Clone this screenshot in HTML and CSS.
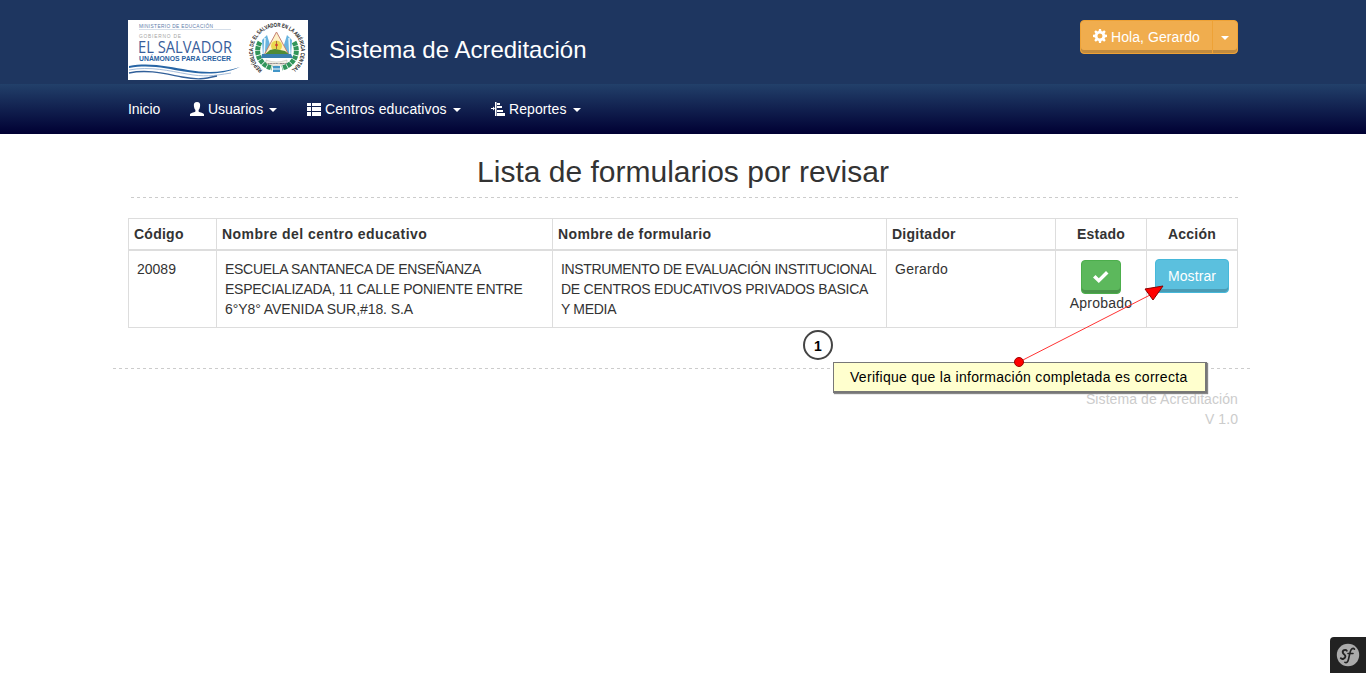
FILE: index.html
```html
<!DOCTYPE html>
<html lang="es">
<head>
<meta charset="utf-8">
<title>Sistema de Acreditación</title>
<link rel="stylesheet" href="styles.css">
</head>
<body>
<header class="header">
  <div class="container header-row">
    <svg class="logo" viewBox="0 0 180 60">
      <defs>
        <path id="seal-ring" d="M134.500 50 A24 24 0 1 1 163.500 50"/>
      </defs>
      <rect width="180" height="60" fill="#fff"/>
      <text class="logo-small" x="11" y="8" textLength="74" fill="#607ca9">MINISTERIO DE EDUCACIÓN</text>
      <path d="M11 9.500H103" stroke="#b9c8da" stroke-width=".6"/>
      <text class="logo-small" x="11" y="18" textLength="42" fill="#a5a5a5">GOBIERNO DE</text>
      <text class="logo-name" x="10" y="33" textLength="94" lengthAdjust="spacingAndGlyphs" fill="#395e9b">EL SALVADOR</text>
      <text class="logo-motto" x="11" y="41" textLength="92" lengthAdjust="spacingAndGlyphs" fill="#2861a1">UNÁMONOS PARA CRECER</text>
      <path d="M1 46C22 42 42 47 60 50S94 53 112 47C92 56 73 54 56 51.500S23 44 1 48Z" fill="#2765a5"/>
      <path d="M1 50C22 46 42 51 59 54S85 56 103 53" fill="none" stroke="#8facd0" stroke-width=".8"/>
      <path d="M1 53C20 49 38 54 54 57S76 59 89 56" fill="none" stroke="#315f99" stroke-width="1.300"/>
      <g fill="none" stroke="#31955a" stroke-width="5" stroke-dasharray="4 .7">
        <path d="M132 22C126 33 132 45 144 48"/>
        <path d="M166 22C172 33 166 45 154 48"/>
      </g>
      <path d="M134 20l5-5 4 13-8 9zM164 20l-5-5-4 13 8 9z" fill="#69b4df"/>
      <path d="M137 18l-1 18M161 18l1 18" stroke="#eef8fc" stroke-width="1.500"/>
      <path d="M148.500 12L135 37H162Z" fill="#fff1c7" stroke="#c58172" stroke-width="1"/>
      <circle cx="148.500" cy="26" r="5.500" fill="#ead84f"/>
      <path d="M136 35l6-5 5-1 5 1 5 1 5 4z" fill="#508b35"/>
      <path d="M134 34h29l2 4h-32z" fill="#397fad"/>
      <path d="M148.500 21v8" stroke="#a66c3c" stroke-width="1"/>
      <circle cx="148.500" cy="25" r="1.300" fill="#d23b30"/>
      <path d="M138 40q10 4 21 0v3q-11 5-21 0z" fill="#f5f1e8" stroke="#aaa69a" stroke-width=".4"/>
      <text class="ribbon" x="140" y="43.800">DIOS UNIÓN LIBERTAD</text>
      <path d="M145 46h7v6h-7z" fill="#4295c7"/><path d="M145 49h7" stroke="#fff"/>
      <text class="seal" fill="#222"><textPath href="#seal-ring" textLength="119" lengthAdjust="spacingAndGlyphs">REPÚBLICA DE EL SALVADOR EN LA AMÉRICA CENTRAL</textPath></text>
    </svg>
    <div class="brand">Sistema de Acreditación</div>
    <div class="user-button">
      <span class="user-name"><svg class="icon gear" viewBox="0 0 14 14"><path fill-rule="evenodd" d="M6 0h2l.4 2 1 .4L11.200 1.200l1.500 1.500-1.100 1.700.4 1 2 .4v2.300l-2 .4-.4 1 1.100 1.700-1.500 1.500-1.800-1.100-1 .4L8 14H6l-.4-2-1-.4-1.800 1.100-1.500-1.500 1.100-1.700-.4-1-2-.4V5.800l2-.4.4-1-1.100-1.700 1.500-1.500 1.800 1.200 1-.4zM7 4.500a2.500 2.500 0 1 0 0 5 2.500 2.500 0 0 0 0-5z"/></svg> Hola, Gerardo</span>
      <span class="user-toggle"><span class="caret"></span></span>
    </div>
  </div>
</header>
<nav class="nav">
  <div class="container nav-row">
    <a class="home">Inicio</a>
    <a class="users"><svg class="icon" viewBox="0 0 14 14"><path d="M7 0C4.600 0 3.600 1.600 3.900 4c.2 2 .8 3 1.500 4v1.500C4 10.600 0 11 0 12.600V14h14v-1.400C14 11 10 10.600 8.600 9.500V8c.8-1 1.300-2 1.500-4C10.400 1.600 9.400 0 7 0z"/></svg> Usuarios <span class="caret"></span></a>
    <a class="schools"><svg class="icon" viewBox="0 0 14 14"><path d="M0 1h4v3H0zm5 0h9v3H5zM0 5h4v4H0zm5 0h9v4H5zM0 10h4v4H0zm5 0h9v4H5z"/></svg> Centros educativos <span class="caret"></span></a>
    <a class="reports"><svg class="icon" viewBox="0 0 14 14"><path d="M4 0h1.500v14H4zM0 6h2V4.500L4 6.500l-2 2V7H0zM6 1h3v2H6zm0 3h5v2H6zm0 4h6v2H6zm0 3h9v3H6z"/></svg> Reportes <span class="caret"></span></a>
  </div>
</nav>
<main class="container main">
  <h1 class="title">Lista de formularios por revisar</h1>
  <svg class="rule" viewBox="0 0 1110 1"><path d="M3 .5H1110"/></svg>
  <table class="forms">
    <colgroup><col class="c-code"><col class="c-school"><col class="c-form"><col class="c-typist"><col class="c-action"><col class="c-action"></colgroup>
    <thead><tr><th>Código</th><th class="wide">Nombre del centro educativo</th><th class="semiwide">Nombre de formulario</th><th>Digitador</th><th class="center">Estado</th><th class="center">Acción</th></tr></thead>
    <tbody><tr>
      <td>20089</td>
      <td><span class="line school-a">ESCUELA SANTANECA DE ENSEÑANZA</span><span class="line school-b">ESPECIALIZADA, 11 CALLE PONIENTE ENTRE</span><span class="line school-c">6°Y8° AVENIDA SUR,#18. S.A</span></td>
      <td><span class="line form-a">INSTRUMENTO DE EVALUACIÓN INSTITUCIONAL</span><span class="line form-b">DE CENTROS EDUCATIVOS PRIVADOS BASICA</span><span class="line form-c">Y MEDIA</span></td>
      <td class="typist">Gerardo</td>
      <td class="center"><span class="button approved"><svg class="icon check" viewBox="0 0 16 14"><path d="M0 7.500L2.500 5l3.300 3.300L13 1l2.500 2.500L5.800 13z"/></svg></span><span class="state">Aprobado</span></td>
      <td class="center"><span class="button show">Mostrar</span></td>
    </tr></tbody>
  </table>
</main>
<footer class="footer">
  <svg class="footer-rule" viewBox="0 0 1140 1"><path d="M0 .5H1140"/></svg>
  <div class="container footer-text">Sistema de Acreditación<br>V 1.0</div>
</footer>
<div class="step">1</div>
<div class="callout">Verifique que la información completada es correcta</div>
<svg class="arrow" viewBox="0 0 160 90">
  <path d="M9 77L142 9" stroke="#f33" stroke-width="1"/>
  <path d="M153 1L135 4L143 15Z" fill="#f00" stroke="#8b0000" stroke-width="1"/>
  <circle cx="9" cy="77" r="4.500" fill="#f00" stroke="#a00000"/>
</svg>
<div class="debug"><svg viewBox="0 0 24 24"><circle cx="12" cy="12" r="11.200" fill="#aaa"/><path d="M10.800 7.800C9.600 6 6.200 7.300 6.800 9.500c.5 1.900 2.900 2.200 2.600 4.200-.3 2-3.300 3-4.600 1.500" fill="none" stroke="#222" stroke-width="1.900" stroke-linecap="round"/><path d="M18.500 6.200c-1.500-1.900-3.600-.3-4.300 2.700l-1.700 7.400c-.6 2.700-1.800 4-3.600 3.100M12 10.500h5" fill="none" stroke="#222" stroke-width="1.600" stroke-linecap="round"/></svg></div>
</body>
</html>
```
FILE: styles.css
```css
* { box-sizing: border-box; }
body { margin: 0; height: 673px; overflow: hidden; position: relative; background: #fff; color: #333; font: 14px/20px "Liberation Sans", Arial, sans-serif; }
.container { width: 1110px; margin: 0 auto; }
.header { height: 84px; background: #1e3660; }
.header-row { display: flex; align-items: flex-start; padding-top: 20px; }
.logo { display: block; width: 180px; height: 60px; }
.logo-small { font-size: 4.8px; }
.logo-name { font: 17px "Open Sans", sans-serif; }
.logo-motto { font-size: 7px; font-weight: bold; }
.seal { font-size: 5.8px; font-weight: bold; }
.ribbon { font-size: 1.7px; }
.brand { margin: 14px 0 0 21px; color: #fff; font-size: 24px; line-height: 32px; }
.user-button { display: flex; width: 158px; height: 34px; margin-left: auto; color: #fff; background: #f0ad4e; border: 1px solid #eea236; border-radius: 4px; box-shadow: inset 0 -3px #c28b3e; }
.user-name { width: 132px; padding: 6px 0 0 12px; border-right: 1px solid #eea236; white-space: nowrap; letter-spacing: .08px; }
.user-toggle { padding: 6px 0 0 8px; }
.icon { display: inline-block; width: 14px; height: 14px; fill: #fff; vertical-align: -1px; }
.nav .icon { vertical-align: -2px; }
.caret { display: inline-block; margin-left: 2px; border-top: 4px solid #fff; border-left: 4px solid transparent; border-right: 4px solid transparent; vertical-align: middle; }
.user-toggle .caret { margin-left: 0; }
.nav { height: 50px; background: linear-gradient(#22406a, #000033); }
.nav-row { display: flex; gap: 30px; padding-top: 15px; color: #fff; }
.nav-row a { white-space: nowrap; }
.home { width: 32px; letter-spacing: -.1px; }
.users { width: 87px; }
.schools { width: 154px; letter-spacing: .1px; }
.reports { letter-spacing: .1px; }
.main { height: 234px; padding-top: 21px; }
.title { margin: 0; font-size: 30px; line-height: 34px; font-weight: normal; text-align: center; }
.rule { display: block; width: 1110px; height: 1px; margin: 8px 0 20px; }
.rule path, .footer-rule path { stroke: #ccc; stroke-dasharray: 3 3; }
.forms { width: 1110px; table-layout: fixed; border-collapse: collapse; }
.c-code { width: 88px; }
.c-school { width: 336px; }
.c-form { width: 334px; }
.c-typist { width: 169px; }
.c-action { width: 91px; }
.forms th { padding: 5px; border: 1px solid #ddd; border-bottom-width: 2px; text-align: left; letter-spacing: .25px; }
.forms .wide { letter-spacing: .46px; }
.forms .semiwide { letter-spacing: .36px; }
.forms td { height: 77px; padding: 8px 0 8px 8px; border: 1px solid #ddd; vertical-align: top; white-space: nowrap; }
.forms .center { padding-left: 0; padding-right: 0; text-align: center; }
.line { display: block; }
.school-a { letter-spacing: -.3px; }
.school-b { letter-spacing: -.25px; }
.school-c { letter-spacing: -.07px; }
.form-a { letter-spacing: -.36px; }
.form-b { letter-spacing: -.24px; }
.form-c { letter-spacing: -.3px; }
.typist { letter-spacing: .25px; }
.button { display: block; height: 34px; margin: 0 auto; padding-top: 6px; border: 1px solid; border-radius: 4px; color: #fff; }
.approved { width: 40px; margin-top: 1px; background: #5cb85c; border-color: #4cae4c; box-shadow: inset 0 -3px #4a954a; }
.check { width: 16px; vertical-align: -2px; }
.show { width: 74px; background: #5bc0de; border-color: #46b8da; box-shadow: inset 0 -3px #4a9bb4; letter-spacing: .1px; }
.state { display: block; margin-top: -1px; letter-spacing: .2px; }
.footer-rule { display: block; width: 1140px; height: 1px; margin: 0 auto 20px; }
.footer-text { text-align: right; color: #ccc; letter-spacing: .08px; }
.step { position: absolute; left: 803px; top: 330px; width: 30px; height: 30px; border: 2px solid #444; border-radius: 50%; background: #fff; color: #000; font-weight: bold; line-height: 28px; text-align: center; }
.callout { position: absolute; left: 833px; top: 362px; width: 374px; height: 31px; padding: 4px 0 0 16px; background: #ffffce; border: 1px solid #777; border-bottom-width: 2px; border-right-width: 2px; box-shadow: 1px 1px 1px #888; color: #000; white-space: nowrap; letter-spacing: .3px; }
.arrow { position: absolute; left: 1010px; top: 285px; width: 160px; height: 90px; }
.debug { position: absolute; right: 0; bottom: 0; width: 36px; height: 36px; padding: 6px; background: #222; border-top-left-radius: 4px; }
.debug svg { display: block; width: 24px; height: 24px; }
```
